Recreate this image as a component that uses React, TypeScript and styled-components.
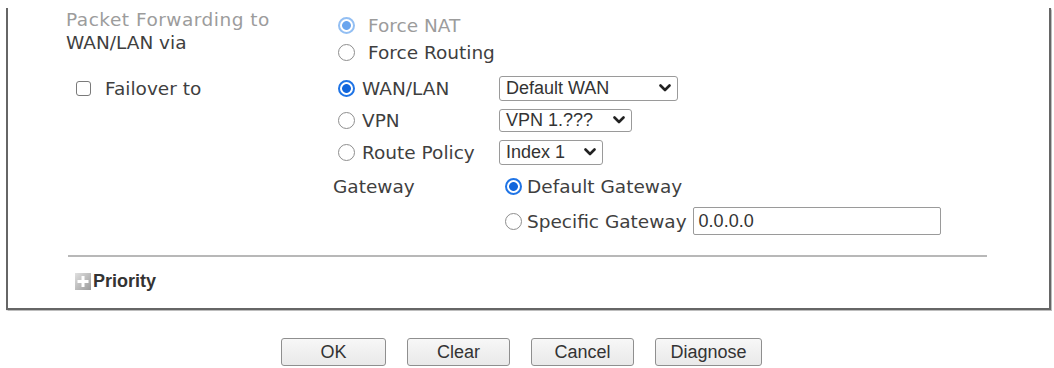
import React from "react";
import styled, { createGlobalStyle } from "styled-components";

const GlobalStyle = createGlobalStyle`
  html, body { margin: 0; padding: 0; background: #ffffff; }
  body { font-family: "DejaVu Sans", Verdana, sans-serif; color: #444; }
`;

const Page = styled.div`
  width: 1054px;
  height: 368px;
  padding: 0 3px 0 6px;
  box-sizing: border-box;
  overflow: hidden;
`;

const Panel = styled.div`
  border: 2px solid #666;
  border-top: none;
  box-shadow: 0 0 1px 0.5px #bdbdbd;
  padding: 0 62px 17px 58px;
`;

const FieldGrid = styled.div<{ $mt: number }>`
  display: grid;
  grid-template-columns: 272px 1fr;
  margin-top: ${(p) => p.$mt}px;
`;

const FieldLabel = styled.div`
  font-size: 18.5px;
  line-height: 23px;
  color: #3f3f3f;
`;

const MutedLine = styled.span`
  display: block;
  color: #9c9c9c;
  letter-spacing: 0.5px;
`;

const OptionList = styled.div<{ $pt: number }>`
  display: flex;
  flex-direction: column;
  padding-top: ${(p) => p.$pt}px;
`;

const OptionRow = styled.label<{ $h: number; $gap: number; $muted?: boolean }>`
  display: flex;
  align-items: center;
  height: ${(p) => p.$h}px;
  gap: ${(p) => p.$gap}px;
  font-size: 18.5px;
  color: ${(p) => (p.$muted ? "#9c9c9c" : "#3f3f3f")};
  white-space: nowrap;
`;

const Radio = styled.span<{ $checked?: boolean; $faded?: boolean }>`
  flex: none;
  width: 17px;
  height: 17px;
  box-sizing: border-box;
  border-radius: 50%;
  border: ${(p) =>
    p.$checked ? `2px solid ${p.$faded ? "#93bff3" : "#1f74e6"}` : "1px solid #8e8e8e"};
  background: ${(p) =>
    p.$checked
      ? `radial-gradient(circle, ${p.$faded ? "#6aa5ee" : "#1266dc"} 0 4px, #ffffff 4.8px)`
      : "#ffffff"};
`;

const Checkbox = styled.span`
  flex: none;
  width: 15px;
  height: 15px;
  box-sizing: border-box;
  border: 1px solid #7a7a7a;
  border-radius: 3px;
  background: #fff;
`;

const FailoverCell = styled.label`
  display: flex;
  align-items: center;
  height: 32px;
  padding-left: 10px;
  gap: 14px;
  font-size: 18.5px;
  color: #3f3f3f;
`;

const ChoiceGrid = styled.div`
  display: grid;
  grid-template-columns: 161px auto;
  grid-auto-rows: 32px;
  align-items: center;
  justify-items: start;
`;

const SelectBox = styled.div<{ $w: number; $h: number }>`
  display: flex;
  align-items: center;
  justify-content: space-between;
  width: ${(p) => p.$w}px;
  height: ${(p) => p.$h}px;
  box-sizing: border-box;
  padding: 0 6px 0 6px;
  border: 1px solid #9a9a9a;
  border-radius: 3px;
  background: #fff;
  font-family: "Liberation Sans", Arial, sans-serif;
  font-size: 18px;
  color: #333;
`;

const GatewayGrid = styled.div`
  display: grid;
  grid-template-columns: 172px 1fr;
  grid-template-rows: 36px 34px;
  margin-left: -5px;
  align-items: center;
`;

const GatewayLabel = styled.div`
  font-size: 18.5px;
  color: #3f3f3f;
`;

const TextInput = styled.div`
  width: 248px;
  height: 28px;
  box-sizing: border-box;
  margin-left: 1px;
  padding-left: 5px;
  display: flex;
  align-items: center;
  border: 1px solid #9a9a9a;
  border-radius: 2px;
  font-family: "Liberation Sans", Arial, sans-serif;
  font-size: 18px;
  color: #333;
`;

const Divider = styled.div`
  height: 2px;
  background: #b8b8b8;
  margin: 17px 0 0 2px;
`;

const PriorityRow = styled.div`
  display: flex;
  align-items: center;
  gap: 2px;
  height: 20px;
  margin-top: 14px;
  padding-left: 9px;
  font-family: "Liberation Sans", Arial, sans-serif;
  font-weight: bold;
  font-size: 18px;
  color: #333;
`;

const ButtonRow = styled.div`
  display: flex;
  gap: 21px;
  margin-top: 28px;
  padding-left: 275px;
`;

const Button = styled.button<{ $w: number }>`
  width: ${(p) => p.$w}px;
  height: 28px;
  padding: 0;
  border: 1px solid #8f8f8f;
  border-radius: 3px;
  background: linear-gradient(#f7f7f7, #e9e9e9);
  font-family: "Liberation Sans", Arial, sans-serif;
  font-size: 18px;
  color: #333;
`;

const Chevron = () => (
  <svg width="12" height="8" viewBox="0 0 12 8" aria-hidden="true">
    <path d="M1.5 1.5 L6 6 L10.5 1.5" fill="none" stroke="#222" strokeWidth="2.6" strokeLinecap="round" strokeLinejoin="round" />
  </svg>
);

const PlusIcon = () => (
  <svg width="16" height="17" viewBox="0 0 16 17" aria-hidden="true">
    <defs>
      <linearGradient id="pg" x1="0" y1="0" x2="1" y2="1">
        <stop offset="0" stopColor="#e0e0e0" />
        <stop offset="1" stopColor="#9a9a9a" />
      </linearGradient>
    </defs>
    <rect x="0" y="0" width="16" height="17" fill="url(#pg)" />
    <rect x="6.5" y="3" width="3" height="11" fill="#fff" />
    <rect x="2.5" y="7" width="11" height="3" fill="#fff" />
  </svg>
);

export default function App() {
  return (
    <>
      <GlobalStyle />
      <Page>
        <Panel>
          <FieldGrid $mt={8}>
            <FieldLabel>
              <MutedLine>Packet Forwarding to</MutedLine>
              WAN/LAN via
            </FieldLabel>
            <OptionList $pt={4}>
              <OptionRow $h={27} $gap={13} $muted>
                <Radio $checked $faded />
                Force NAT
              </OptionRow>
              <OptionRow $h={27} $gap={13}>
                <Radio />
                Force Routing
              </OptionRow>
            </OptionList>
          </FieldGrid>

          <FieldGrid $mt={6}>
            <div>
              <FailoverCell>
                <Checkbox />
                Failover to
              </FailoverCell>
            </div>
            <div>
              <ChoiceGrid>
                <OptionRow $h={32} $gap={7}>
                  <Radio $checked />
                  WAN/LAN
                </OptionRow>
                <SelectBox $w={179} $h={25}>
                  Default WAN
                  <Chevron />
                </SelectBox>
                <OptionRow $h={32} $gap={7}>
                  <Radio />
                  VPN
                </OptionRow>
                <SelectBox $w={133} $h={23}>
                  VPN 1.???
                  <Chevron />
                </SelectBox>
                <OptionRow $h={32} $gap={7}>
                  <Radio />
                  Route Policy
                </OptionRow>
                <SelectBox $w={104} $h={25}>
                  Index 1
                  <Chevron />
                </SelectBox>
              </ChoiceGrid>
              <GatewayGrid>
                <GatewayLabel>Gateway</GatewayLabel>
                <OptionRow $h={36} $gap={5}>
                  <Radio $checked />
                  Default Gateway
                </OptionRow>
                <div />
                <OptionRow $h={34} $gap={5}>
                  <Radio />
                  Specific Gateway
                  <TextInput>0.0.0.0</TextInput>
                </OptionRow>
              </GatewayGrid>
            </div>
          </FieldGrid>

          <Divider />
          <PriorityRow>
            <PlusIcon />
            Priority
          </PriorityRow>
        </Panel>

        <ButtonRow>
          <Button $w={105}>OK</Button>
          <Button $w={103}>Clear</Button>
          <Button $w={103}>Cancel</Button>
          <Button $w={107}>Diagnose</Button>
        </ButtonRow>
      </Page>
    </>
  );
}
